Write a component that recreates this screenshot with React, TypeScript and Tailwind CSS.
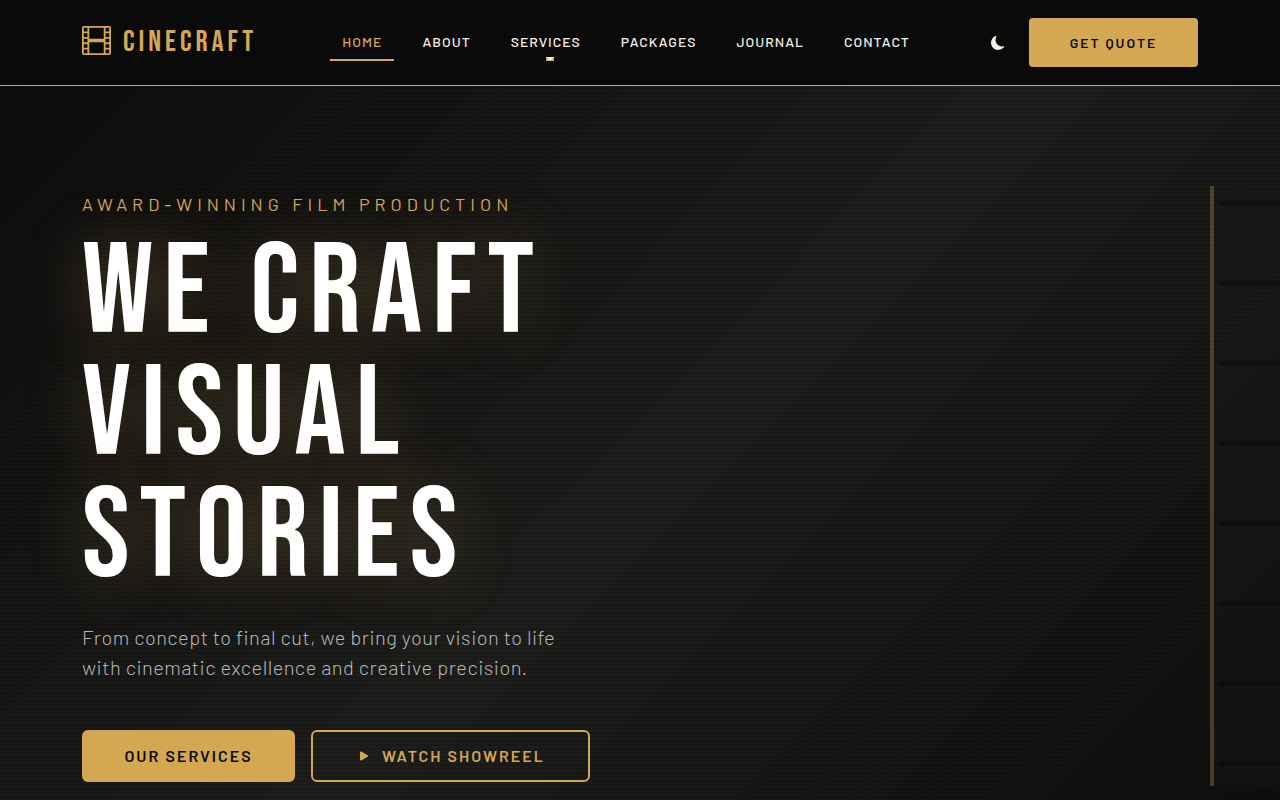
import { BsFilm, BsMoonFill, BsPlayFill } from 'react-icons/bs';

const navLinks = [
  { id: 'home', name: 'Home', active: true },
  { id: 'about', name: 'About' },
  { id: 'services', name: 'Services', dropdown: true },
  { id: 'packages', name: 'Packages' },
  { id: 'journal', name: 'Journal' },
  { id: 'contact', name: 'Contact' }
];

function Header() {
  return (
    <header className="border-b border-[#d4a853] bg-[#0a0a0a]">
      <div className="mx-auto flex h-[85px] max-w-[1140px] items-center px-3">
        <a href="#home" className="mr-4 flex items-center gap-3 pb-1 text-[#d4a853]">
          <BsFilm size={29} />
          <span className="pt-0.5 font-['Bebas_Neue','Roboto',sans-serif] text-3xl leading-8 tracking-[4px]">
            CINECRAFT
          </span>
        </a>

        <nav className="mx-auto">
          <ul className="flex gap-4">
            {navLinks.map((link) => (
              <li key={link.id}>
                <a
                  href={`#${link.id}`}
                  className={`relative block px-3 pt-2 pb-2.5 text-sm leading-[18px] font-medium tracking-[1px] uppercase ${
                    link.active ? 'text-[#d4a853]' : 'text-[#f5f0e6]'
                  }`}
                >
                  {link.name}
                  {link.active && (
                    <span className="absolute inset-x-0 bottom-0 h-0.5 bg-[#d4a853]"></span>
                  )}
                  {link.dropdown && (
                    <span className="absolute bottom-0 left-1/2 h-1 w-2 border-x-4 border-t-4 border-transparent border-t-[#f5f0e6] bg-[#d4a853]"></span>
                  )}
                </a>
              </li>
            ))}
          </ul>
        </nav>

        <div className="flex items-center gap-3">
          <button type="button" aria-label="Toggle dark mode" className="p-3 text-[#f5f0e6]">
            <BsMoonFill size={14} />
          </button>
          <button
            type="button"
            className="h-[49px] w-[169px] rounded-sm bg-[#d4a853] text-sm font-semibold tracking-[2px] text-[#0a0a0a] uppercase"
          >
            Get Quote
          </button>
        </div>
      </div>
    </header>
  );
}

function Hero() {
  return (
    <section
      id="home"
      className="relative flex min-h-screen items-center overflow-hidden bg-[linear-gradient(135deg,#0d0d0d_0%,#1e1e1c_50%,#0d0d0d_100%)]"
    >
      {/* Scanlines */}
      <div className="absolute inset-0 bg-[repeating-linear-gradient(0deg,rgba(0,0,0,0.15)_0px,rgba(0,0,0,0.15)_2px,transparent_2px,transparent_4px)]"></div>

      {/* Film strip */}
      <div className="absolute top-1/2 -right-2.5 h-[600px] w-20 -translate-y-1/2 border-l-4 border-[#d4a853]/30 bg-[#1a1a1a]/30 bg-clip-padding pl-[5px]">
        <div className="h-full bg-[repeating-linear-gradient(180deg,transparent_0px,transparent_15px,rgba(5,5,5,0.4)_15px,rgba(5,5,5,0.4)_20px,transparent_20px,transparent_80px)]"></div>
      </div>

      <div className="relative mx-auto w-full max-w-[1140px] px-3">
        <p className="mb-[15px] text-lg leading-7 tracking-[5px] text-[#d4a853] uppercase">
          Award-Winning Film Production
        </p>
        <h1 className="mb-[23px] font-['Bebas_Neue','Roboto',sans-serif] text-[128px] leading-[122px] font-normal tracking-[10px] text-white uppercase [text-shadow:0_0_60px_rgba(212,168,83,0.3)]">
          We Craft
          <br />
          Visual
          <br />
          Stories
        </h1>
        <p className="mb-12 max-w-[500px] text-xl leading-[30px] font-light tracking-wide text-[#b8b8b8]">
          From concept to final cut, we bring your vision to life with cinematic excellence and creative precision.
        </p>
        <div className="flex flex-wrap gap-4 text-base font-semibold tracking-[2px] uppercase">
          <a
            href="#services"
            className="flex h-[52px] w-[213px] items-center justify-center rounded-md bg-[#d4a853] text-[#0a0a0a]"
          >
            Our Services
          </a>
          <a
            href="#showreel"
            className="flex h-[52px] w-[279px] items-center justify-center gap-2.5 rounded-md border-2 border-[#d4a853] text-[#d4a853]"
          >
            <BsPlayFill size={16} />
            Watch Showreel
          </a>
        </div>
      </div>
    </section>
  );
}

export default function App() {
  return (
    <div className="min-h-screen bg-[#0a0a0a] font-['Barlow','Roboto',sans-serif]">
      <Header />
      <Hero />
    </div>
  );
}
